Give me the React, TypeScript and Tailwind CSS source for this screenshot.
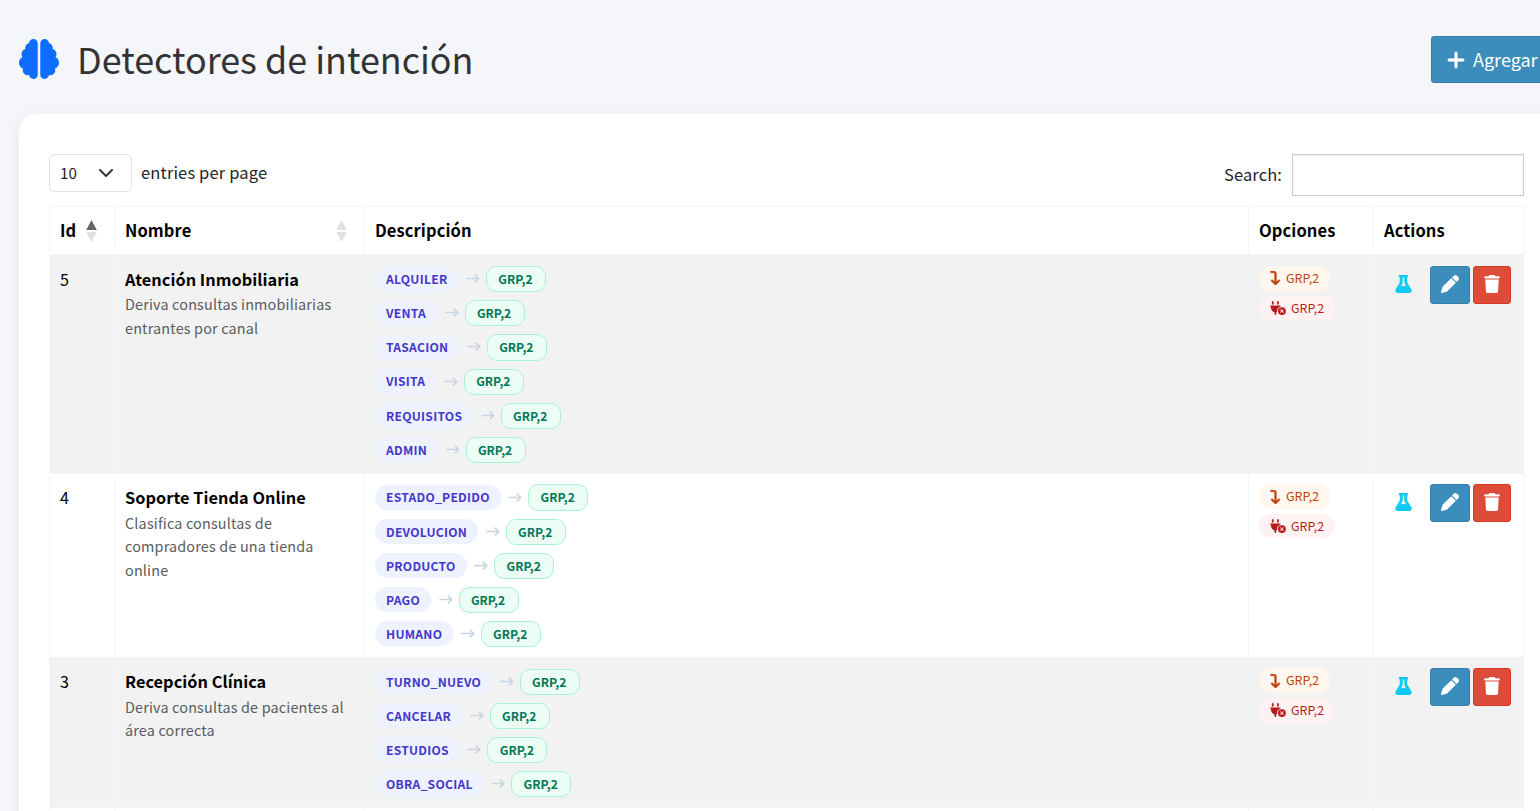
import type { ReactNode } from 'react'
import {
  FaArrowTurnDown,
  FaBrain,
  FaFlask,
  FaPen,
  FaPlugCircleXmark,
  FaPlus,
  FaTrash,
} from 'react-icons/fa6'

interface Detector {
  id: number
  name: string
  description: string
  intents: string[]
}

const detectors: Detector[] = [
  {
    id: 5,
    name: 'Atención Inmobiliaria',
    description: 'Deriva consultas inmobiliarias entrantes por canal',
    intents: ['ALQUILER', 'VENTA', 'TASACION', 'VISITA', 'REQUISITOS', 'ADMIN'],
  },
  {
    id: 4,
    name: 'Soporte Tienda Online',
    description: 'Clasifica consultas de compradores de una tienda online',
    intents: ['ESTADO_PEDIDO', 'DEVOLUCION', 'PRODUCTO', 'PAGO', 'HUMANO'],
  },
  {
    id: 3,
    name: 'Recepción Clínica',
    description: 'Deriva consultas de pacientes al área correcta',
    intents: ['TURNO_NUEVO', 'CANCELAR', 'ESTUDIOS', 'OBRA_SOCIAL'],
  },
]

const columns = 'grid grid-cols-[65px_250px_884px_125px_150px] border-r border-[#f4f4f4]'

function SortIcon({ active = false }: { active?: boolean }) {
  return (
    <svg width="11" height="22" viewBox="0 0 11 22">
      <path d="M5.5 0L10.8 10H0.2z" fill={active ? '#666' : '#e0e0e0'} />
      <path d="M5.5 22L10.8 12H0.2z" fill="#e0e0e0" />
    </svg>
  )
}

function HeadCell({ label, children }: { label: string; children?: ReactNode }) {
  return (
    <div className="flex items-center border-l border-[#f4f4f4] px-[10px] text-[16.5px] font-bold tracking-[0.09px] text-black">
      <span className="pb-px">{label}</span>
      {children}
    </div>
  )
}

function IntentRow({ intent }: { intent: string }) {
  return (
    <div className="flex h-[26.09px] items-center">
      <span className="flex h-[25px] items-center rounded-full bg-[#eef2ff] px-[11px] text-[12.1px] font-semibold tracking-[0.26px] text-[#4338ca]">
        {intent}
      </span>
      <svg className="ml-[7.5px] mr-[6px]" width="14" height="10" viewBox="0 0 14 10" fill="none" stroke="#cbd5e1" strokeWidth="1.7">
        <path d="M0.3 4.5H12.6M8.8 0.7l3.8 3.8-3.8 3.8" />
      </svg>
      <span className="flex h-full w-[60px] items-center justify-center rounded-[10px] border border-[#a7f3d0] bg-[#ecfdf5] pr-px text-[12.1px] font-semibold text-[#047857]">
        GRP,2
      </span>
    </div>
  )
}

function DetectorRow({ detector, striped }: { detector: Detector; striped: boolean }) {
  const cell = 'border-l border-[#f4f4f4] px-[10px] pt-[10.7px]'

  return (
    <div className={`${columns} border-t ${striped ? 'bg-[#f2f2f2]' : 'bg-white'}`}>
      <div className={`${cell} text-[16.1px] leading-[27px] text-black`}>{detector.id}</div>
      <div className={cell}>
        <div className="text-[16.3px] font-semibold leading-[27px] tracking-[0.05px] text-black">{detector.name}</div>
        <div className="-mt-[0.6px] text-[14.4px] leading-[23.6px] tracking-[0.17px] text-[#595c5f]">{detector.description}</div>
      </div>
      <div className="flex flex-col gap-2 border-l border-[#f4f4f4] px-[10px] pb-[9.84px] pt-[10.9px]">
        {detector.intents.map((intent) => (
          <IntentRow key={intent} intent={intent} />
        ))}
      </div>
      <div className={`${cell} flex flex-col items-start gap-[5px] text-[12.4px]`}>
        <span className="flex h-[24.6px] items-center rounded-[12px] bg-[#fff7ed] px-[11px] text-[#c2410c]">
          <FaArrowTurnDown className="mr-[5px] h-[14px] w-[11px]" strokeWidth="16" />
          GRP,2
        </span>
        <span className="flex h-[24.6px] items-center rounded-[12px] bg-[#fef2f2] px-[11px] text-[#b91c1c]">
          <FaPlugCircleXmark className="mr-[5px] h-[14px] w-4" />
          GRP,2
        </span>
      </div>
      <div className={`${cell} flex items-start`}>
        <span className="ml-[10.5px] mr-[18.5px] flex h-[38px] w-[17px] items-center pb-[2px] text-[18px] text-[#0dcaf0]">
          <FaFlask strokeWidth="18" />
        </span>
        <button className="mr-[3px] flex h-[38px] w-10 items-center justify-center rounded-[3px] border border-[#367fa9] bg-[#3c8dbc] pb-[2px] text-[18px] text-white">
          <FaPen />
        </button>
        <button className="flex h-[38px] w-[38px] items-center justify-center rounded-[3px] border border-[#d73925] bg-[#dd4b39] pb-[2px] text-[18px] text-white">
          <FaTrash />
        </button>
      </div>
    </div>
  )
}

export default function App() {
  return (
    <div className="h-screen overflow-hidden bg-[#f4f6fa] pl-[19px] font-['Noto_Sans_CJK_SC',sans-serif] text-[#212529]">
      <div className="w-[1560px]">
        {/* Page heading */}
        <header className="flex h-[114px] items-start pt-[33px]">
          <FaBrain className="mt-[6px] h-10 w-10 text-[#0d6efd]" />
          <h1 className="ml-[18px] text-[35.9px] leading-[50px] text-[#333]">Detectores de intención</h1>
          <button className="ml-auto mr-[23px] mt-[3px] flex h-[47px] w-[125px] items-center rounded-[3px] border border-[#367fa9] bg-[#3c8dbc] pl-[15px] text-[18px] text-white">
            <FaPlus className="mr-2 h-5 w-[18px]" strokeWidth="16" />
            Agregar
          </button>
        </header>

        <main className="h-[760px] rounded-[18px] bg-white pl-[30px] pt-10 shadow-[0_4px_16px_rgba(0,0,0,0.06)]">
          {/* Table controls */}
          <div className="flex h-[52px] w-[1475px] items-start">
            <div className="flex h-[38px] w-[83px] items-center rounded-md border border-[#dee2e6] pl-[10px] text-[15.2px]">
              <span className="pb-px">10</span>
              <svg className="ml-[21px]" width="16" height="16" viewBox="0 0 16 16" fill="none" stroke="#343a40" strokeWidth="2" strokeLinecap="round" strokeLinejoin="round">
                <path d="m2 5 6 6 6-6" />
              </svg>
            </div>
            <span className="ml-[9px] text-[16.5px] leading-[36px] tracking-[0.15px]">entries per page</span>
            <label className="ml-auto flex items-center text-[16.5px] tracking-[0.1px]">
              <span className="pb-[2px]">Search:</span>
              <input className="ml-[10px] h-[42px] w-[232px] border border-[#ccc] bg-white shadow-[inset_0_1px_2px_rgba(0,0,0,0.075)]" />
            </label>
          </div>

          {/* Detectors table */}
          <div className="w-[1475px]">
            <div className={`${columns} h-[48.4px] border-t`}>
              <HeadCell label="Id">
                <span className="ml-[10px]"><SortIcon active /></span>
              </HeadCell>
              <HeadCell label="Nombre">
                <span className="ml-auto mr-[7px]"><SortIcon /></span>
              </HeadCell>
              <HeadCell label="Descripción" />
              <HeadCell label="Opciones" />
              <HeadCell label="Actions" />
            </div>
            {detectors.map((detector, index) => (
              <DetectorRow key={detector.id} detector={detector} striped={index % 2 === 0} />
            ))}
            <div className={`${columns} h-12 border-t`}>
              {[0, 1, 2, 3, 4].map((column) => (
                <div key={column} className="border-l border-[#f4f4f4]" />
              ))}
            </div>
          </div>
        </main>
      </div>
    </div>
  )
}
